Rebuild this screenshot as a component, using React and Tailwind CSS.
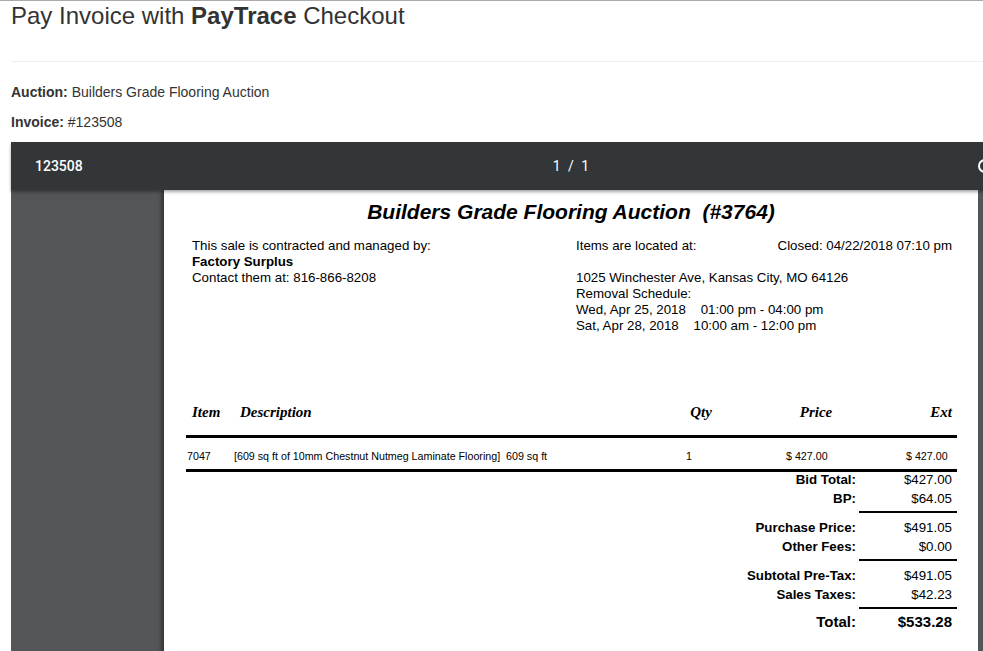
import React from "react";

const totals = [
  [
    ["Bid Total:", "$427.00"],
    ["BP:", "$64.05"],
  ],
  [
    ["Purchase Price:", "$491.05"],
    ["Other Fees:", "$0.00"],
  ],
  [
    ["Subtotal Pre-Tax:", "$491.05"],
    ["Sales Taxes:", "$42.23"],
  ],
];

function TotalRow({ label, value }) {
  return (
    <div className="flex justify-end pr-[5px] leading-[15px] text-[13.3px] font-bold">
      <span className="text-right">{label}</span>
      <span className="w-[96px] text-right font-normal">{value}</span>
    </div>
  );
}

export default function App() {
  return (
    <div className="w-[983px] h-[651px] overflow-hidden bg-white border-t border-[#aaaaaa] font-['Liberation_Sans',Arial,sans-serif] text-[#333]">
      <div className="pl-[11px]">
        <h1 className="text-[24px] leading-[28px] pt-[1px]">
          Pay Invoice with <b>PayTrace</b> Checkout
        </h1>
        <div className="mt-[31px] border-t border-[#eeeeee]"></div>
        <p className="mt-[20px] text-[14px] leading-[20px]">
          <b>Auction:</b> Builders Grade Flooring Auction
        </p>
        <p className="mt-[10px] text-[14px] leading-[20px]">
          <b>Invoice:</b> #123508
        </p>

        {/* pdf viewer */}
        <div className="mt-[10px] w-[1122px] bg-[#525659]">
          <div className="relative z-10 h-[48px] bg-[#323639] grid grid-cols-[1fr_auto_1fr] items-center text-white font-['Roboto',sans-serif] text-[14px] shadow-[0_2px_3px_rgba(0,0,0,0.35)]">
            <span className="pl-[24px] font-medium">123508</span>
            <span className="tracking-[2px]">1 / 1</span>
            <span className="flex pl-[384px]">
              <svg width="20" height="20" viewBox="0 0 20 20">
                <circle cx="10" cy="10" r="6" fill="none" stroke="#fff" strokeWidth="2" />
              </svg>
            </span>
          </div>
          <div className="flex">
            <div className="w-[153px] shrink-0"></div>
            <div className="w-[814px] h-[470px] shrink-0 bg-white shadow-[-3px_0_3px_rgba(0,0,0,0.35)] text-black">
              <h2 className="pt-[10px] text-center text-[21px] leading-[24px] font-bold italic whitespace-pre">
                Builders Grade Flooring Auction  (#3764)
              </h2>
              <div className="mt-[14px] flex pl-[28px] pr-[26px] text-[13.3px] leading-[16px]">
                <div className="w-[384px]">
                  <div>This sale is contracted and managed by:</div>
                  <div className="font-bold">Factory Surplus</div>
                  <div>Contact them at: 816-866-8208</div>
                </div>
                <div className="flex-1">
                  <div className="flex justify-between">
                    <span>Items are located at:</span>
                    <span>Closed: 04/22/2018 07:10 pm</span>
                  </div>
                  <div className="h-[16px]"></div>
                  <div>1025 Winchester Ave, Kansas City, MO 64126</div>
                  <div>Removal Schedule:</div>
                  <div className="whitespace-pre">Wed, Apr 25, 2018    01:00 pm - 04:00 pm</div>
                  <div className="whitespace-pre">Sat, Apr 28, 2018    10:00 am - 12:00 pm</div>
                </div>
              </div>

              <div className="ml-[22px] w-[771px] mt-[70px]">
                <div className="flex font-['Liberation_Serif',serif] font-bold italic text-[15px] leading-[16px]">
                  <span className="w-[54px] pl-[6px]">Item</span>
                  <span className="w-[430px]">Description</span>
                  <span className="w-[62px] text-center">Qty</span>
                  <span className="w-[38px]"></span>
                  <span className="w-[92px] text-center">Price</span>
                  <span className="flex-1 pr-[5px] text-right">Ext</span>
                </div>
                <div className="mt-[15px] h-[3px] bg-black"></div>
                <div className="flex text-[10.7px] leading-[12px] pt-[12px] pb-[7px]">
                  <span className="w-[48px] pl-[1px]">7047</span>
                  <span className="w-[452px] whitespace-pre">[609 sq ft of 10mm Chestnut Nutmeg Laminate Flooring]  609 sq ft</span>
                  <span className="w-[100px]">1</span>
                  <span className="w-[120px]">$ 427.00</span>
                  <span>$ 427.00</span>
                </div>
                <div className="h-[3px] bg-black"></div>

                {totals.map((group, i) => (
                  <div key={i} className={i === 0 ? "" : "mt-[7px]"}>
                    <div className="space-y-[4px]">
                      {group.map(([l, v]) => (
                        <TotalRow key={l} label={l} value={v} />
                      ))}
                    </div>
                    <div className="mt-[5px] ml-auto w-[98px] h-[2px] bg-black"></div>
                  </div>
                ))}
                <div className="mt-[5px] flex justify-end pr-[5px] text-[15px] leading-[16px] font-bold">
                  <span>Total:</span>
                  <span className="w-[96px] text-right">$533.28</span>
                </div>
              </div>
            </div>
          </div>
        </div>
      </div>
    </div>
  );
}
